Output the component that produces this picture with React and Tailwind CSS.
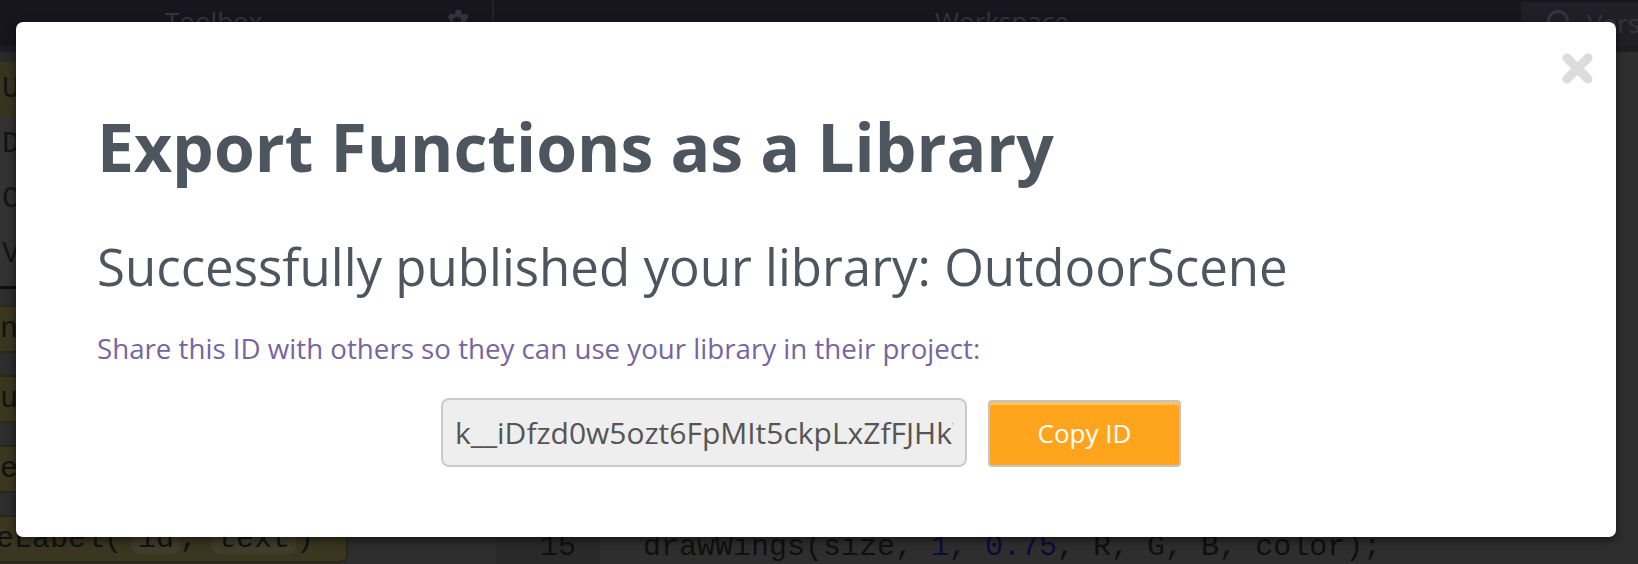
const ID = 'k__iDfzd0w5ozt6FpMIt5ckpLxZfFJHkWq2vRbN8sT';

function Gear({ className }) {
  return (
    <svg viewBox="0 0 24 24" className={className} fill="currentColor">
      <path d="M19.4 13a7.5 7.5 0 0 0 0-2l2.1-1.6-2-3.5-2.5 1a7.6 7.6 0 0 0-1.7-1L15 3.2h-4l-.4 2.7a7.6 7.6 0 0 0-1.7 1l-2.5-1-2 3.5L6.6 11a7.5 7.5 0 0 0 0 2l-2.1 1.6 2 3.5 2.5-1a7.6 7.6 0 0 0 1.7 1l.4 2.7h4l.4-2.7a7.6 7.6 0 0 0 1.7-1l2.5 1 2-3.5zM12 15.5a3.5 3.5 0 1 1 0-7 3.5 3.5 0 0 1 0 7z" />
    </svg>
  );
}

function Category({ label, active }) {
  return (
    <div className={`flex h-[55px] items-center pl-[2px] text-[30px] text-[#141414] ${active ? 'bg-[#37341f]' : 'bg-[#323232]'}`}>
      {label}
    </div>
  );
}

function Block({ children }) {
  return (
    <div className="flex h-[48px] w-fit items-center rounded-r-[8px] border-2 border-l-0 border-[#2a2714] bg-[#3a3620] pr-[12px] text-[30px] leading-[30px] text-[#121212]">
      {children}
    </div>
  );
}

function Toolbox() {
  return (
    <div className="flex w-[496px] flex-col bg-[#2d2d2d] font-['Liberation_Mono',monospace]">
      <div className="h-[10px] bg-[#2a2a2a]" />
      <Category label="UI" active />
      <Category label="Data" />
      <Category label="Ctrl" />
      <Category label="Vars" />
      <div className="h-[4px] bg-[#323232]" />
      <div className="h-[3px] bg-[#0e0e0e]" />
      <div className="flex flex-col gap-[22px] pt-[16px]">
        <Block>ni()</Block>
        <Block>ur()</Block>
        <Block>er()</Block>
        <Block>
          <span className="-ml-[4px]">eLabel(</span>
          <span className="ml-[10px] rounded-[7px] bg-[#403d2c] px-[6px]">id</span>
          <span>,</span>
          <span className="ml-[14px] rounded-[7px] bg-[#403d2c] px-[6px]">text</span>
          <span className="mr-[20px]">)</span>
        </Block>
      </div>
    </div>
  );
}

function Editor() {
  return (
    <div className="flex flex-1 bg-[#2e2e2e] font-['Liberation_Mono',monospace] text-[30px] leading-[30px] text-[#101010]">
      <div className="flex w-[104px] flex-col justify-end bg-[#292929] pb-[2px] pl-[44px]">
        <span>15</span>
      </div>
      <div className="flex flex-1 flex-col justify-end pb-[2px] pl-[43px]">
        <span>
          drawWings(size, <span className="text-[#0b0b3a]">1</span>, <span className="text-[#0b0b3a]">0.75</span>, R, G, B, color);
        </span>
      </div>
    </div>
  );
}

function CloseIcon() {
  return (
    <svg viewBox="0 0 31 31" className="h-[31px] w-[31px]">
      <path d="M5 5L26 26M26 5L5 26" stroke="#dcdcdc" strokeWidth="9" strokeLinecap="round" />
    </svg>
  );
}

export default function App() {
  return (
    <div className="relative h-[564px] w-[1638px] overflow-hidden bg-[#2c2c2c] font-['Open_Sans',sans-serif]">
      {/* the app behind the dialog, dimmed */}
      <div className="flex h-[46px] bg-[#17161e] text-[26px] text-[#35343e]">
        <div className="flex w-[494px] items-start border-r-2 border-[#24232c] pt-[2px]">
          <span className="ml-[165px]">Toolbox</span>
          <Gear className="ml-auto mr-[20px] mt-[4px] h-[30px] w-[30px]" />
        </div>
        <div className="flex flex-1 items-start pt-[2px]">
          <span className="ml-[441px]">Workspace</span>
          <div className="ml-auto flex h-full w-[117px] items-start gap-[18px] bg-[#201f28] pl-[26px] pt-[4px]">
            <div className="mt-[4px] h-[22px] w-[22px] shrink-0 rounded-full border-[3px] border-[#35343e]" />
            <span className="-mt-[2px]">Versions</span>
          </div>
        </div>
      </div>
      <div className="h-[6px] bg-[#1d1c25]" />
      <div className="flex h-[512px]">
        <Toolbox />
        <Editor />
      </div>

      {/* dialog */}
      <div className="absolute left-[16px] top-[22px] flex h-[515px] w-[1600px] flex-col rounded-[7px] bg-white pl-[81px] pt-[84px] shadow-[0_3px_10px_rgba(0,0,0,0.55)]">
        <button className="absolute right-[23px] top-[31px]">
          <CloseIcon />
        </button>
        <h1 className="text-[66px] font-bold leading-[80px] text-[#4d565e]">Export Functions as a Library</h1>
        <h2 className="mt-[50px] text-[51px] leading-[60px] text-[#4d565e]">
          Successfully published your library: OutdoorScene
        </h2>
        <p className="mt-[35px] text-[27.7px] leading-[34px] text-[#7665a0]">
          Share this ID with others so they can use your library in their project:
        </p>
        <div className="-ml-[81px] mt-[33px] flex justify-center gap-[21px] pr-[10px]">
          <input
            readOnly
            value={ID}
            className="h-[69px] w-[526px] rounded-[8px] border-2 border-[#cbcbcb] bg-[#eeeeee] px-[12px] text-[30px] text-[#555555] outline-none"
          />
          <button className="mt-[2px] h-[67px] w-[193px] rounded-[4px] border-2 border-[#c4c4c4] bg-[#ffa41c] text-[26px] text-white shadow-[inset_0_3px_0_#ffc45e]">
            Copy ID
          </button>
        </div>
      </div>
    </div>
  );
}
